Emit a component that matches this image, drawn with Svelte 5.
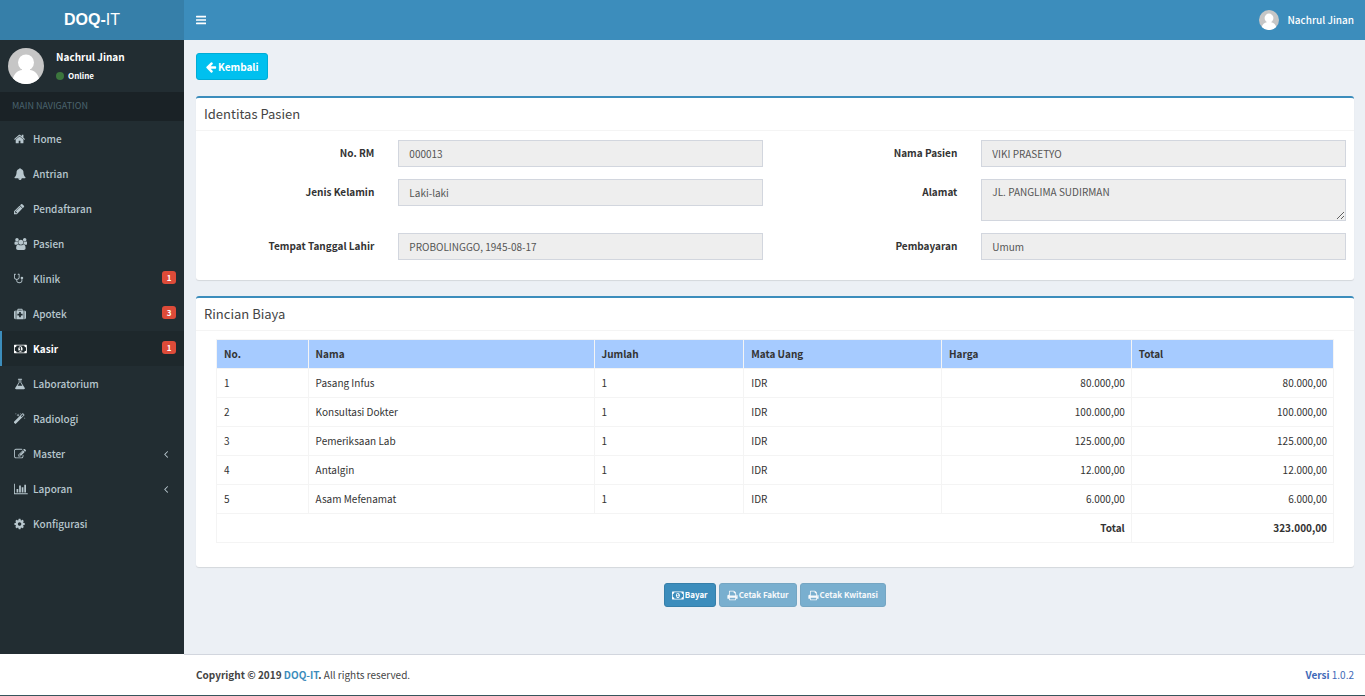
<script lang="ts">
  type MenuItem = {
    label: string;
    icon: string;
    badge?: number;
    active?: boolean;
    tree?: boolean;
  };

  const menu: MenuItem[] = [
    { label: 'Home', icon: 'home' },
    { label: 'Antrian', icon: 'bell' },
    { label: 'Pendaftaran', icon: 'pencil' },
    { label: 'Pasien', icon: 'users' },
    { label: 'Klinik', icon: 'stethoscope', badge: 1 },
    { label: 'Apotek', icon: 'medkit', badge: 3 },
    { label: 'Kasir', icon: 'money', badge: 1, active: true },
    { label: 'Laboratorium', icon: 'flask' },
    { label: 'Radiologi', icon: 'magic' },
    { label: 'Master', icon: 'edit', tree: true },
    { label: 'Laporan', icon: 'chart', tree: true },
    { label: 'Konfigurasi', icon: 'cog' },
  ];

  const fields = [
    { id: 'no-rm', label: 'No. RM', value: '000013' },
    { id: 'nama', label: 'Nama Pasien', value: 'VIKI PRASETYO' },
    { id: 'kelamin', label: 'Jenis Kelamin', value: 'Laki-laki' },
    { id: 'alamat', label: 'Alamat', value: 'JL. PANGLIMA SUDIRMAN', multiline: true },
    { id: 'ttl', label: 'Tempat Tanggal Lahir', value: 'PROBOLINGGO, 1945-08-17' },
    { id: 'pembayaran', label: 'Pembayaran', value: 'Umum' },
  ];

  const items = [
    { nama: 'Pasang Infus', jumlah: 1, harga: 80000 },
    { nama: 'Konsultasi Dokter', jumlah: 1, harga: 100000 },
    { nama: 'Pemeriksaan Lab', jumlah: 1, harga: 125000 },
    { nama: 'Antalgin', jumlah: 1, harga: 12000 },
    { nama: 'Asam Mefenamat', jumlah: 1, harga: 6000 },
  ];

  const total = items.reduce((sum, item) => sum + item.jumlah * item.harga, 0);

  function rupiah(value: number) {
    return value.toString().replace(/\B(?=(\d{3})+$)/g, '.') + ',00';
  }

  // filled glyphs on a 1792 unit grid
  const icons: Record<string, { box: string; d: string }> = {
    bars: {
      box: '128 0 1536 1792',
      d: 'M192 1280h1408q64 0 64 64v128q0 64-64 64h-1408q-64 0-64-64v-128q0-64 64-64zM192 768h1408q64 0 64 64v128q0 64-64 64h-1408q-64 0-64-64v-128q0-64 64-64zM192 256h1408q64 0 64 64v128q0 64-64 64h-1408q-64 0-64-64v-128q0-64 64-64z',
    },
    home: {
      box: '64 0 1792 1792',
      d: 'M1472 992v480q0 26-19 45t-45 19h-384v-384h-256v384h-384q-26 0-45-19t-19-45v-480q0-1 .5-3t.5-3l575-474 575 474q1 2 1 6zm223-69l-62 74q-8 9-21 11h-3q-13 0-21-7l-692-577-692 577q-12 8-24 7-13-2-21-11l-62-74q-8-10-7-23.5t11-21.5l719-599q32-26 76-26t76 26l244 204v-195q0-14 9-23t23-9h192q14 0 23 9t9 23v408l219 182q10 8 11 21.5t-7 23.5z',
    },
    bell: {
      box: '0 0 1792 1792',
      d: 'M912 1696q0-16-16-16-59 0-101.5-42.5t-42.5-101.5q0-16-16-16t-16 16q0 73 51.5 124.5t124.5 51.5q16 0 16-16zm816-288q0 52-38 90t-90 38h-448q0 106-75 181t-181 75-181-75-75-181h-448q-52 0-90-38t-38-90q50-42 91-88t85-119.5 74.5-158.5 50-206 19.5-260q0-152 117-282.5t307-158.5q-8-19-8-39 0-40 28-68t68-28 68 28 28 68q0 20-8 39 190 28 307 158.5t117 282.5q0 139 19.5 260t50 206 74.5 158.5 85 119.5 91 88z',
    },
    pencil: {
      box: '128 0 1792 1792',
      d: 'M491 1536l91-91-235-235-91 91v107h128v128h107zm523-928q0-22-22-22-10 0-17 7l-542 542q-7 7-7 17 0 22 22 22 10 0 17-7l542-542q7-7 7-17zm-54-192l416 416-832 832h-416v-416zm683 96q0 53-37 90l-166 166-416-416 166-165q36-38 90-38 53 0 91 38l235 234q37 39 37 91z',
    },
    users: {
      box: '-64 0 1920 1792',
      d: 'M593 896q-162 5-265 128h-134q-82 0-138-40.5t-56-118.5q0-353 124-353 6 0 43.5 21t97.5 42.5 119 21.5q67 0 133-23-5 37-5 66 0 159 81 256zm1071 637q0 120-73 189.5t-194 69.5h-874q-121 0-194-69.500t-73-189.500q0-53 3.500-103.500t14-109 26.500-108.500 43-97.500 62-81 85.500-53.500 111.500-20q10 0 43 21.500t73 48 107 48 135 21.500 135-21.500 107-48 73-48 43-21.500q61 0 111.500 20t85.500 53.500 62 81 43 97.500 26.500 108.500 14 109 3.500 103.500zM640 256q0 106-75 181t-181 75-181-75-75-181 75-181 181-75 181 75 75 181zM1344 640q0 159-112.500 271.500t-271.500 112.500-271.500-112.500-112.500-271.500 112.500-271.500 271.500-112.500 271.500 112.500 112.500 271.500zM1920 865q0 78-56 118.500t-138 40.500h-134q-103-123-265-128 90-97 90-256 0-29-5-66 66 23 133 23 59 0 119-21.500t97.500-42.500 43.500-21q115 0 115 353zM1792 256q0 106-75 181t-181 75-181-75-75-181 75-181 181-75 181 75 75 181z',
    },
    stethoscope: {
      box: '0 0 1536 1792',
      d: 'M0 200q0-72 64-72h170q64 0 64 64t-64 64h-106v384q0 130 93 191t195 61 195-61 93-191v-384h-106q-64 0-64-64t64-64h170q64 0 64 72v440q0 150-98 252t-254 127v125q0 106 94 181t226 75 226-75 94-181v-232q-128-48-128-176 0-78 57-135t135-57 135 57 57 135q0 128-128 176v232q0 159-131 271t-317 113-317-113-131-271v-125q-156-25-254-127t-98-252z',
    },
    medkit: {
      box: '0 0 1792 1792',
      d: 'M640 256h512v128h-512zM1280 1088v-192q0-32-32-32h-224v-224q0-32-32-32h-192q-32 0-32 32v224h-224q-32 0-32 32v192q0 32 32 32h224v224q0 32 32 32h192q32 0 32-32v-224h224q32 0 32-32zM256 384v1280h-32q-92 0-158-66t-66-158v-832q0-92 66-158t158-66zM1440 384v1280h-1088v-1280h160v-160q0-96 96-96h576q96 0 96 96v160zM1792 608v832q0 92-66 158t-158 66h-32v-1280h32q92 0 158 66t66 158z',
    },
    money: {
      box: '0 0 1920 1792',
      d: 'M768 1152h384v-96h-128v-448h-114l-148 137 77 80q42-37 55-57h2v288h-128zM1280 896q0 70-21 142t-59.500 134-101.500 101-138 39-138-39-101.500-101-59.500-134-21-142 21-142 59.500-134 101.500-101 138-39 138 39 101.500 101 59.500 134 21 142zM1792 1152v-512q-106 0-181-75t-75-181h-1152q0 106-75 181t-181 75v512q106 0 181 75t75 181h1152q0-106 75-181t181-75zM1920 320v1152q0 64-64 64h-1792q-64 0-64-64v-1152q0-64 64-64h1792q64 0 64 64z',
    },
    flask: {
      box: '0 0 1792 1792',
      d: 'M1591 1448q56 89 21.5 152.5t-140.5 63.5h-1152q-106 0-140.5-63.5t21.5-152.5l503-793v-399h-64q-26 0-45-19t-19-45 19-45 45-19h512q26 0 45 19t19 45-19 45-45 19h-64v399zm-779-725l-272 429h712l-272-429-20-31v-436h-128v436z',
    },
    magic: {
      box: '64 0 1792 1792',
      d: 'M1190 581l293-293-107-107-293 293zm447-293q0 27-18 45l-1286 1286q-18 18-45 18t-45-18l-198-198q-18-18-18-45t18-45l1286-1286q18-18 45-18t45 18l198 198q18 18 18 45zM382 96l98 30-98 30-30 98-30-98-98-30 98-30 30-98zM732 256l196 60-196 60-60 196-60-196-196-60 196-60 60-196zM1694 736l98 30-98 30-30 98-30-98-98-30 98-30 30-98zM1054 96l98 30-98 30-30 98-30-98-98-30 98-30 30-98z',
    },
    edit: {
      box: '0 0 1792 1792',
      d: 'M888 1184l116-116-152-152-116 116v56h96v96h56zM1280 532l-330 330 30 30 330-330zM1408 1058v190q0 119-84 203t-204 85h-832q-119 0-203-85t-85-203v-832q0-119 85-203t203-85h832q63 0 117 25 15 7 18 23 3 17-9 29l-49 49q-14 14-32 8-23-6-45-6h-832q-66 0-113 47t-47 113v832q0 66 47 113t113 47h832q66 0 113-47t47-113v-126q0-13 9-22l64-64q15-15 35-7t20 29zM1312 320l288 288-672 672h-288v-288zM1756 452l-92 92-288-288 92-92q28-28 68-28t68 28l152 152q28 28 28 68t-28 68z',
    },
    chart: {
      box: '0 0 2048 1792',
      d: 'M640 896v512h-256v-512zM1024 384v1024h-256v-1024zM2048 1536v128h-2048v-1536h128v1408zM1408 640v768h-256v-768zM1792 256v1152h-256v-1152z',
    },
    cog: {
      box: '64 0 1792 1792',
      d: 'M1152 896q0-106-75-181t-181-75-181 75-75 181 75 181 181 75 181-75 75-181zm512-109v222q0 12-8 23t-20 13l-185 28q-19 54-39 91 35 50 107 138 10 12 10 25t-9 23q-27 37-99 108t-94 71q-12 0-26-9l-138-108q-44 23-91 38-16 136-29 186-7 28-36 28h-222q-14 0-24.5-8.5t-11.5-21.5l-28-184q-49-16-90-37l-141 107q-10 9-25 9-14 0-25-11-126-114-165-168-7-10-7-23 0-12 8-23 15-21 51-66.5t54-70.5q-27-50-41-99l-183-27q-13-2-21-12.5t-8-23.5v-222q0-12 8-23t19-13l186-28q14-46 39-92-40-57-107-138-10-12-10-24 0-10 9-23 26-36 98.5-107.5t94.5-71.5q13 0 26 10l138 107q44-23 91-38 16-136 29-186 7-28 36-28h222q14 0 24.5 8.5t11.5 21.5l28 184q49 16 90 37l142-107q9-9 24-9 13 0 25 10 129 119 165 170 7 8 7 22 0 12-8 23-15 21-51 66.5t-54 70.5q26 50 41 98l183 28q13 2 21 12.5t8 23.5z',
    },
    angle: {
      box: '0 0 1792 1792',
      d: 'M1203 544q0 13-10 23l-393 393 393 393q10 10 10 23t-10 23l-50 50q-10 10-23 10t-23-10l-466-466q-10-10-10-23t10-23l466-466q10-10 23-10t23 10l50 50q10 10 10 23z',
    },
    back: {
      box: '0 0 1792 1792',
      d: 'M1664 896v128q0 53-32.5 90.5t-84.5 37.5h-704l293 294q38 36 38 90t-38 90l-75 76q-37 37-90 37-52 0-91-37l-651-652q-37-37-37-90 0-52 37-91l651-650q38-38 91-38 52 0 90 38l75 74q38 38 38 91t-38 91l-293 293h704q52 0 84.5 37.5t32.5 90.5z',
    },
    print: {
      box: '0 0 1792 1792',
      d: 'M448 1536h896v-256h-896v256zm0-640h896v-384h-160q-40 0-68-28t-28-68v-160h-640v640zm1152 64q0-26-19-45t-45-19-45 19-19 45 19 45 45 19 45-19 19-45zm128 0v416q0 13-9.5 22.5t-22.5 9.5h-224v160q0 40-28 68t-68 28h-960q-40 0-68-28t-28-68v-160h-224q-13 0-22.5-9.5t-9.5-22.5v-416q0-79 56.5-135.5t135.5-56.5h64v-544q0-40 28-68t68-28h672q40 0 88 20t76 48l152 152q28 28 48 76t20 88v256h64q79 0 135.5 56.5t56.5 135.5z',
    },
  };
</script>

{#snippet icon(name: string)}
  <svg class="icon" viewBox={icons[name].box} aria-hidden="true">
    <path d={icons[name].d} fill="currentColor" fill-rule="evenodd" />
  </svg>
{/snippet}

{#snippet avatar()}
  <svg class="avatar" viewBox="0 0 36 36" aria-hidden="true">
    <circle cx="18" cy="18" r="18" fill="#c6c6c6" />
    <circle cx="18" cy="14.5" r="8" fill="#fff" />
    <path d="M14 20h8v2c4 0 8 4 9 8.500A18 18 0 0 1 5 30.500c1-4.500 5-8.500 9-8.500z" fill="#fff" />
  </svg>
{/snippet}

<div class="wrapper">
  <header class="top">
    <a class="logo" href="#home"><b>DOQ-</b>IT</a>
    <nav class="navbar">
      <button class="toggle" aria-label="Toggle navigation">{@render icon('bars')}</button>
      <a class="account" href="#account">{@render avatar()}<span>Nachrul Jinan</span></a>
    </nav>
  </header>

  <div class="middle">
    <aside class="sidebar">
      <div class="user-panel">
        {@render avatar()}
        <div class="info">
          <p>Nachrul Jinan</p>
          <a href="#status"><i class="dot"></i>Online</a>
        </div>
      </div>
      <div class="nav-header">MAIN NAVIGATION</div>
      <ul class="menu">
        {#each menu as item}
          <li>
            <a href="#{item.label.toLowerCase()}" class:active={item.active}>
              <span class="menu-icon">{@render icon(item.icon)}</span>
              <span class="menu-label">{item.label}</span>
              {#if item.badge}<span class="badge">{item.badge}</span>{/if}
              {#if item.tree}<span class="arrow">{@render icon('angle')}</span>{/if}
            </a>
          </li>
        {/each}
      </ul>
    </aside>

    <main class="content">
      <a class="btn back" href="#kasir">{@render icon('back')}Kembali</a>

      <section class="box">
        <h3>Identitas Pasien</h3>
        <form class="patient">
          {#each fields as field}
            <div class="group">
              <label for={field.id}>{field.label}</label>
              <div class="control">
                {#if field.multiline}
                  <textarea id={field.id} readonly value={field.value}></textarea>
                {:else}
                  <input id={field.id} type="text" readonly value={field.value} />
                {/if}
              </div>
            </div>
          {/each}
        </form>
      </section>

      <section class="box">
        <h3>Rincian Biaya</h3>
        <div class="table-wrap">
          <table>
            <colgroup>
              <col class="c-no" />
              <col class="c-nama" />
              <col class="c-jumlah" />
              <col class="c-uang" />
              <col class="c-harga" />
              <col />
            </colgroup>
            <thead>
              <tr>
                <th>No.</th>
                <th>Nama</th>
                <th>Jumlah</th>
                <th>Mata Uang</th>
                <th>Harga</th>
                <th>Total</th>
              </tr>
            </thead>
            <tbody>
              {#each items as item, i}
                <tr>
                  <td>{i + 1}</td>
                  <td>{item.nama}</td>
                  <td>{item.jumlah}</td>
                  <td>IDR</td>
                  <td class="num">{rupiah(item.harga)}</td>
                  <td class="num">{rupiah(item.jumlah * item.harga)}</td>
                </tr>
              {/each}
            </tbody>
            <tfoot>
              <tr>
                <td class="num" colspan="5">Total</td>
                <td class="num">{rupiah(total)}</td>
              </tr>
            </tfoot>
          </table>
        </div>
      </section>

      <div class="actions">
        <button class="btn small">{@render icon('money')}Bayar</button>
        <button class="btn small" disabled>{@render icon('print')}Cetak Faktur</button>
        <button class="btn small" disabled>{@render icon('print')}Cetak Kwitansi</button>
      </div>
    </main>
  </div>

  <footer>
    <div class="footer-inner">
      <span><b>Copyright © 2019 <a href="#home">DOQ-IT</a>.</b> All rights reserved.</span>
      <span class="version"><b>Versi</b> 1.0.2</span>
    </div>
  </footer>
</div>

<style>
  :global(body) {
    margin: 0;
    background: #222d32;
  }

  .wrapper {
    display: flex;
    flex-direction: column;
    min-height: 100vh;
    font-family: 'Noto Sans CJK SC', 'Noto Sans', sans-serif;
    font-size: 10px;
    line-height: 16px;
    color: #333;
  }

  .wrapper *,
  .wrapper {
    box-sizing: border-box;
  }

  a {
    color: inherit;
    text-decoration: none;
  }

  button,
  input,
  textarea {
    font: inherit;
  }

  .icon {
    display: block;
    height: 12px;
    flex: none;
  }

  .avatar {
    display: block;
    flex: none;
  }

  .top {
    display: flex;
    height: 40px;
    color: #fff;
  }

  .logo {
    width: 184px;
    background: #367fa9;
    font-family: 'Liberation Sans', Arial, sans-serif;
    font-size: 16px;
    line-height: 40px;
    text-align: center;
  }

  .navbar {
    flex: 1;
    display: flex;
    justify-content: space-between;
    padding-right: 11px;
    background: #3c8dbc;
  }

  .toggle {
    padding: 0 12px;
    border: 0;
    background: none;
    color: #fff;
    cursor: pointer;
  }

  .account {
    display: flex;
    align-items: center;
    gap: 8px;
    font-weight: 500;
  }

  .account .avatar {
    width: 20px;
    height: 20px;
  }

  .middle {
    flex: 1;
    display: flex;
  }

  .sidebar {
    flex: none;
    width: 184px;
    background: #222d32;
    color: #b8c7ce;
  }

  .user-panel {
    display: flex;
    gap: 12px;
    padding: 8px;
    color: #fff;
    font-weight: 700;
  }

  .user-panel .avatar {
    width: 36px;
    height: 36px;
  }

  .info p {
    margin: 0 0 4px;
    line-height: 18px;
  }

  .info a {
    display: flex;
    align-items: center;
    gap: 4px;
    font-size: 8px;
    line-height: 12px;
  }

  .dot {
    width: 8px;
    height: 8px;
    border-radius: 50%;
    background: #3c763d;
  }

  .nav-header {
    padding: 6px 12px 8px;
    background: #1a2226;
    color: #4b646f;
    font-size: 9px;
    line-height: 15px;
  }

  .menu {
    margin: 0;
    padding: 0;
    list-style: none;
    font-weight: 500;
  }

  .menu a {
    display: flex;
    align-items: center;
    height: 35px;
    padding: 0 8px 0 12px;
    border-left: 2px solid transparent;
  }

  .menu a.active {
    border-left-color: #3c8dbc;
    background: #1e282c;
    color: #fff;
    font-weight: 700;
  }

  .menu-icon {
    width: 19px;
  }

  .menu-label {
    flex: 1;
  }

  .badge {
    width: 14px;
    margin-bottom: 3px;
    border-radius: 3px;
    background: #dd4b39;
    color: #fff;
    font-size: 8px;
    font-weight: 700;
    line-height: 13px;
    text-align: center;
  }

  .arrow {
    padding-right: 4px;
  }

  .content {
    flex: 1;
    min-width: 0;
    padding: 13px 11px 16px 12px;
    background: #ecf0f5;
  }

  .btn {
    display: inline-flex;
    align-items: center;
    border: 1px solid #367fa9;
    border-radius: 3px;
    background: #3c8dbc;
    color: #fff;
    font-weight: 700;
    cursor: pointer;
  }

  .back {
    gap: 1px;
    height: 27px;
    padding: 0 8px;
    border-color: #00acd6;
    background: #00c0ef;
  }

  .small {
    gap: 1px;
    height: 24px;
    padding: 0 7px;
    font-size: 8px;
  }

  .small .icon {
    height: 11px;
  }

  .small:disabled {
    opacity: 0.65;
    cursor: not-allowed;
  }

  .box {
    margin-top: 16px;
    border-top: 2px solid #3c8dbc;
    border-radius: 3px;
    background: #fff;
    box-shadow: 0 1px 1px rgba(0, 0, 0, 0.1);
  }

  h3 {
    margin: 0;
    padding: 8px;
    border-bottom: 1px solid #f4f4f4;
    color: #444;
    font-size: 13px;
    font-weight: 400;
    line-height: 16px;
  }

  .patient {
    display: grid;
    grid-template-columns: 1fr 1fr;
    row-gap: 12px;
    margin: 0 -4px;
    padding: 9px 0 20px;
  }

  .group {
    display: flex;
    align-items: flex-start;
  }

  .group label {
    width: 33.333%;
    padding: 5px 12px 0;
    font-weight: 700;
    text-align: right;
  }

  .control {
    flex: 1;
    display: flex;
    padding: 0 12px;
  }

  .control input,
  .control textarea {
    width: 100%;
    height: 27px;
    margin: 0;
    padding: 4px 10px;
    border: 1px solid #d2d6de;
    border-radius: 0;
    outline: 0;
    background: #eee;
    color: #555;
  }

  .control textarea {
    height: 42px;
    resize: vertical;
  }

  .table-wrap {
    padding: 8px 20px 24px;
  }

  table {
    width: 100%;
    border-collapse: collapse;
    table-layout: fixed;
  }

  .c-no {
    width: 8.2%;
  }

  .c-nama {
    width: 25.6%;
  }

  .c-jumlah {
    width: 13.4%;
  }

  .c-uang {
    width: 17.7%;
  }

  .c-harga {
    width: 17%;
  }

  th,
  td {
    padding: 6px 6px 6px 7px;
    border: 1px solid #f4f4f4;
    text-align: left;
  }

  th {
    background: #a6cbff;
    font-weight: 700;
  }

  .num {
    text-align: right;
  }

  tfoot td {
    font-weight: 700;
  }

  .actions {
    display: flex;
    justify-content: center;
    gap: 3px;
    margin-top: 16px;
  }

  footer {
    padding-left: 184px;
    border-bottom: 1px solid #36555c;
    background: #fff;
    color: #444;
  }

  .footer-inner {
    display: flex;
    justify-content: space-between;
    padding: 12px 11px 12px 12px;
    border-top: 1px solid #d2d6de;
  }

  footer a {
    color: #3c8dbc;
  }

  .version {
    color: #4169b8;
  }
</style>
